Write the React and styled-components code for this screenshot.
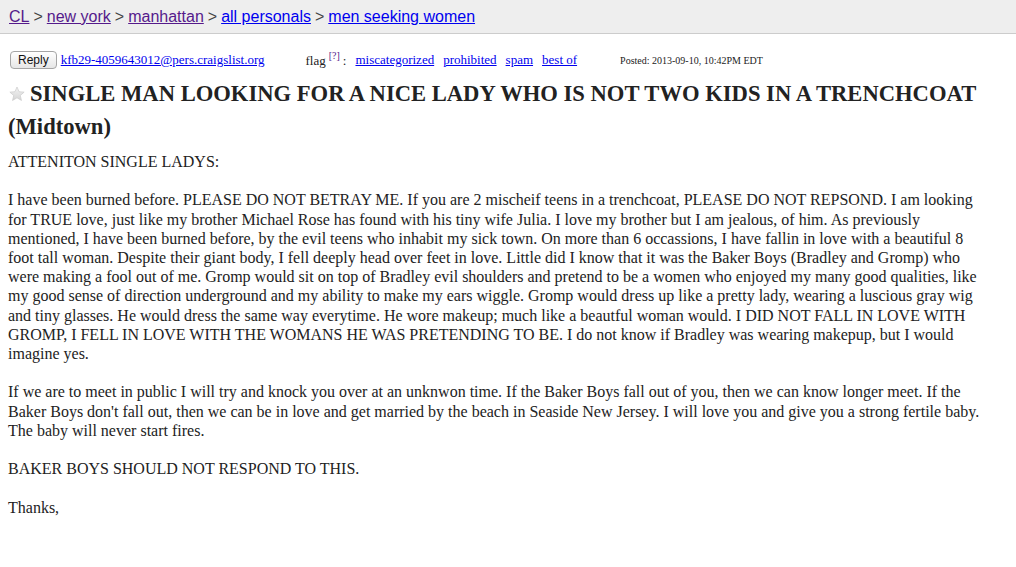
import styled, { createGlobalStyle } from "styled-components";

const Global = createGlobalStyle`
  html, body {
    margin: 0;
    padding: 0;
    background: #fff;
  }
  body {
    font-family: "Liberation Serif", "Times New Roman", serif;
    color: #222;
  }
`;

const Header = styled.header`
  height: 33px;
  background: #eeeeee;
  border-bottom: 1px solid #cccccc;
  display: flex;
  align-items: center;
  padding: 0 8px 0 9px;
  font-family: "Liberation Sans", Arial, sans-serif;
  font-size: 16px;
  color: #444;
`;

const Crumb = styled.a`
  color: ${(p) => (p.$visited ? "#551a8b" : "#0000ee")};
  text-decoration: underline;
`;

const Sep = styled.span`
  margin: 0 4px;
`;

const Page = styled.main`
  padding: 0 0 0 8px;
`;

const PostingInfo = styled.div`
  display: flex;
  align-items: center;
  height: 18px;
  margin-top: 17px;
  font-size: 13px;
`;

const ReplyButton = styled.button`
  height: 18px;
  margin-left: 2px;
  padding: 0 7px;
  border: 1px solid #a5a5a5;
  border-radius: 4px;
  background: linear-gradient(#ffffff, #e6e6e6);
  font-family: "Liberation Sans", Arial, sans-serif;
  font-size: 12px;
  color: #111;
  line-height: 16px;
`;

const Link = styled.a`
  color: #0000ee;
  text-decoration: underline;
`;

const Email = styled(Link)`
  margin-left: 4px;
`;

const Flags = styled.div`
  display: flex;
  align-items: center;
  gap: 9px;
  margin-left: 41px;
`;

const Help = styled.sup`
  font-size: 10px;
  color: #551a8b;
  margin: 0 3px;
  position: relative;
  top: -1px;
`;

const Posted = styled.span`
  margin-left: 43px;
  font-size: 10px;
`;

const Title = styled.h2`
  margin: 8px 0 0;
  font-size: 22.6px;
  line-height: 33px;
  font-weight: bold;
  color: #222;
`;

const Star = styled.svg`
  width: 16px;
  height: 16px;
  margin: 0 5px 0 1px;
  vertical-align: -1px;
`;

const Body = styled.section`
  margin-top: 9px;
  font-size: 16px;
  line-height: 19.2px;
  color: #222;
  white-space: nowrap;
`;

const App = () => {
  return (
    <>
      <Global />
      <Header>
        <Crumb $visited href="#">CL</Crumb>
        <Sep>&gt;</Sep>
        <Crumb $visited href="#">new york</Crumb>
        <Sep>&gt;</Sep>
        <Crumb $visited href="#">manhattan</Crumb>
        <Sep>&gt;</Sep>
        <Crumb href="#">all personals</Crumb>
        <Sep>&gt;</Sep>
        <Crumb href="#">men seeking women</Crumb>
      </Header>
      <Page>
        <PostingInfo>
          <ReplyButton>Reply</ReplyButton>
          <Email href="#">kfb29-4059643012@pers.craigslist.org</Email>
          <Flags>
            <span>
              flag<Help>[?]</Help>:
            </span>
            <Link href="#">miscategorized</Link>
            <Link href="#">prohibited</Link>
            <Link href="#">spam</Link>
            <Link href="#">best of</Link>
          </Flags>
          <Posted>Posted: 2013-09-10, 10:42PM EDT</Posted>
        </PostingInfo>
        <Title>
          <Star viewBox="0 0 24 24">
            <defs>
              <linearGradient id="starfill" x1="0" y1="0" x2="0" y2="1">
                <stop offset="0" stopColor="#f4f4f4" />
                <stop offset="1" stopColor="#d4d4d4" />
              </linearGradient>
            </defs>
            <path
              d="M12 1.5l3.1 7.1 7.6.6-5.8 5 1.8 7.5L12 17.7l-6.7 4 1.8-7.5-5.8-5 7.6-.6z"
              fill="url(#starfill)"
              stroke="#c8c8c8"
              strokeWidth="1"
            />
          </Star>
          SINGLE MAN LOOKING FOR A NICE LADY WHO IS NOT TWO KIDS IN A TRENCHCOAT
          <br />
          (Midtown)
        </Title>
        <Body>
          ATTENITON SINGLE LADYS:
          <br />
          <br />
          I have been burned before. PLEASE DO NOT BETRAY ME. If you are 2 mischeif teens in a trenchcoat, PLEASE DO NOT REPSOND. I am looking
          <br />
          for TRUE love, just like my brother Michael Rose has found with his tiny wife Julia. I love my brother but I am jealous, of him. As previously
          <br />
          mentioned, I have been burned before, by the evil teens who inhabit my sick town. On more than 6 occassions, I have fallin in love with a beautiful 8
          <br />
          foot tall woman. Despite their giant body, I fell deeply head over feet in love. Little did I know that it was the Baker Boys (Bradley and Gromp) who
          <br />
          were making a fool out of me. Gromp would sit on top of Bradley evil shoulders and pretend to be a women who enjoyed my many good qualities, like
          <br />
          my good sense of direction underground and my ability to make my ears wiggle. Gromp would dress up like a pretty lady, wearing a luscious gray wig
          <br />
          and tiny glasses. He would dress the same way everytime. He wore makeup; much like a beautful woman would. I DID NOT FALL IN LOVE WITH
          <br />
          GROMP, I FELL IN LOVE WITH THE WOMANS HE WAS PRETENDING TO BE. I do not know if Bradley was wearing makepup, but I would
          <br />
          imagine yes.
          <br />
          <br />
          If we are to meet in public I will try and knock you over at an unknwon time. If the Baker Boys fall out of you, then we can know longer meet. If the
          <br />
          Baker Boys don't fall out, then we can be in love and get married by the beach in Seaside New Jersey. I will love you and give you a strong fertile baby.
          <br />
          The baby will never start fires.
          <br />
          <br />
          BAKER BOYS SHOULD NOT RESPOND TO THIS.
          <br />
          <br />
          Thanks,
        </Body>
      </Page>
    </>
  );
};

export default App;
